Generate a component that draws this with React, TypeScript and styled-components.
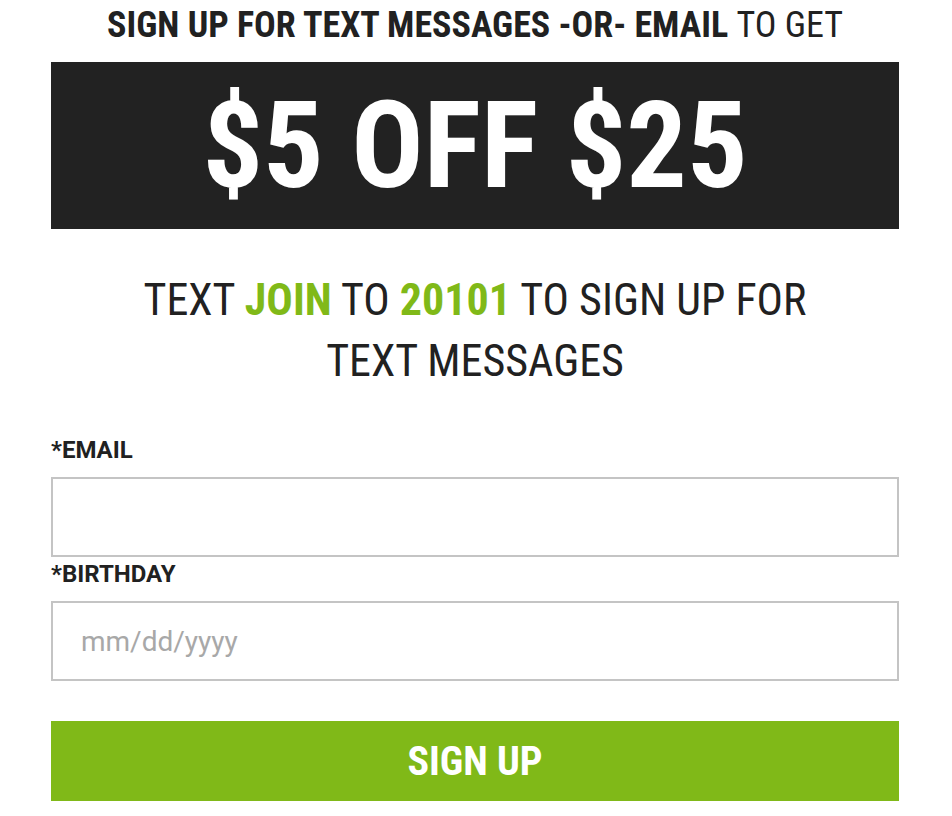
import React from 'react'
import styled, { createGlobalStyle } from 'styled-components'

const GlobalStyle = createGlobalStyle`
  html, body {
    margin: 0;
    padding: 0;
    background: #ffffff;
  }
  body {
    font-family: Roboto, "Liberation Sans", sans-serif;
    color: #212121;
  }
`

const green = '#80b918'

const Wrapper = styled.div`
  width: 848px;
  margin: 0 0 0 51px;
  display: flex;
  flex-direction: column;
`

const Kicker = styled.h2`
  margin: 5px 0 0;
  font-size: 36px;
  line-height: 40px;
  font-weight: 700;
  font-stretch: 75%;
  text-align: center;
  text-transform: uppercase;
  color: #212121;
`

const Light = styled.span`
  font-weight: 400;
`

const Banner = styled.div`
  margin-top: 17px;
  height: 167px;
  background: #222222;
  display: flex;
  align-items: center;
  justify-content: center;
`

const Offer = styled.h1`
  margin: 0;
  color: #ffffff;
  font-size: 120px;
  line-height: 1;
  font-weight: 700;
  font-stretch: 75%;
`

const Instructions = styled.p`
  margin: 41px auto 0;
  width: 700px;
  font-size: 44px;
  line-height: 61px;
  font-weight: 400;
  font-stretch: 75%;
  text-align: center;
  color: #212121;
`

const Highlight = styled.span`
  color: ${green};
  font-weight: 700;
`

const Form = styled.form`
  margin-top: 46px;
  display: flex;
  flex-direction: column;
`

const Label = styled.label`
  font-size: 24px;
  line-height: 24px;
  font-weight: 700;
  color: #212121;
  margin-bottom: 15px;
`

const Input = styled.input<{ $gap?: number }>`
  box-sizing: border-box;
  width: 100%;
  height: 80px;
  border: 2px solid #c4c4c4;
  border-radius: 0;
  padding: 0 28px;
  font-family: Roboto, "Liberation Sans", sans-serif;
  font-size: 28px;
  color: #212121;
  outline: none;
  margin-bottom: ${p => p.$gap ?? 0}px;

  &::placeholder {
    color: #a8a8a8;
  }
`

const SubmitButton = styled.button`
  margin-top: 40px;
  height: 80px;
  border: none;
  background: ${green};
  color: #ffffff;
  font-family: Roboto, "Liberation Sans", sans-serif;
  font-size: 40px;
  font-weight: 700;
  font-stretch: 75%;
  cursor: pointer;
`

const App = (): JSX.Element => {
  return (
    <>
      <GlobalStyle />
      <Wrapper>
        <Kicker>
          Sign up for text messages -or- email <Light>to get</Light>
        </Kicker>
        <Banner>
          <Offer>$5 OFF $25</Offer>
        </Banner>
        <Instructions>
          TEXT <Highlight>JOIN</Highlight> TO <Highlight>20101</Highlight> TO SIGN UP FOR TEXT MESSAGES
        </Instructions>
        <Form onSubmit={e => e.preventDefault()}>
          <Label htmlFor="email">*EMAIL</Label>
          <Input id="email" type="email" $gap={5} />
          <Label htmlFor="birthday">*BIRTHDAY</Label>
          <Input id="birthday" type="text" placeholder="mm/dd/yyyy" />
          <SubmitButton type="submit">SIGN UP</SubmitButton>
        </Form>
      </Wrapper>
    </>
  )
}

export default App
